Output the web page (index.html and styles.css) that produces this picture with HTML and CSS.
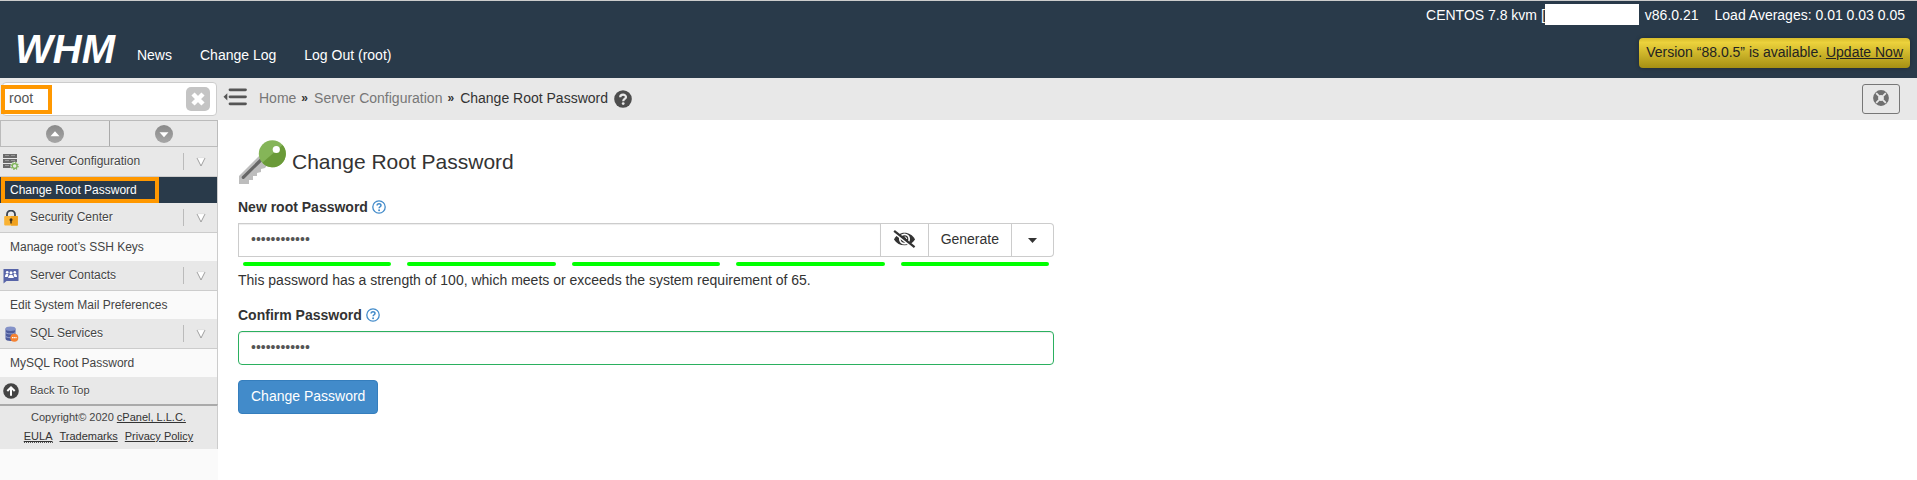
FILE: index.html
```html
<!DOCTYPE html>
<html lang="en">
<head>
<meta charset="utf-8">
<title>Change Root Password - WHM</title>
<link rel="stylesheet" href="styles.css">
</head>
<body>
<svg class="defs" aria-hidden="true">
  <defs>
    <linearGradient id="knob" x1="0" y1="0" x2="0" y2="1"><stop offset="0" stop-color="#8a8a8a"/><stop offset="1" stop-color="#a6a6a6"/></linearGradient>
    <symbol id="chevron" viewBox="0 0 10 10"><path d="M1 1h8L5 8.500z" fill="#fff"/><path d="M1 1l4 8 4-8" fill="none" stroke="#a0a0a0" stroke-width="1"/><path d="M1 .7h8" stroke="#dcdcdc" stroke-width=".6"/></symbol>
    <symbol id="question" viewBox="0 0 14 14"><circle cx="7" cy="7" r="6.200" fill="none" stroke="#428bca" stroke-width="1.300"/><path d="M5.100 5.500C5.100 3.100 9 3.200 9 5.400 9 6.700 7.100 6.800 7.100 8.300" fill="none" stroke="#428bca" stroke-width="1.500"/><circle cx="7.100" cy="10.300" r=".95" fill="#428bca"/></symbol>
  </defs>
</svg>

<header class="header">
  <a class="logo" href="#">WHM</a>
  <nav class="topnav">
    <a href="#">News</a>
    <a href="#">Change Log</a>
    <a href="#">Log Out (root)</a>
  </nav>
  <div class="status">
    <div class="server">
      <span class="host">CENTOS 7.8 kvm [<span class="redacted"></span></span>
      <span class="version">v86.0.21</span>
      <span>Load Averages: 0.01 0.03 0.05</span>
    </div>
    <div class="update">Version “88.0.5” is available. <a href="#">Update Now</a></div>
  </div>
</header>

<div class="page">
  <aside class="sidebar">
    <form class="search">
      <input class="search-input" type="text" value="root" aria-label="Search">
      <button class="clear" type="button" aria-label="Clear search">
        <svg viewBox="0 0 24 24"><path d="M7 7l10 10M17 7L7 17" stroke="#fff" stroke-width="4.500"/></svg>
      </button>
    </form>
    <div class="toggles">
      <button type="button" aria-label="Collapse all"><svg viewBox="0 0 18 18"><circle cx="9" cy="9" r="9" fill="url(#knob)"/><path d="M4.500 11.200L9 6.200l4.500 5z" fill="#fff"/></svg></button>
      <button type="button" aria-label="Expand all"><svg viewBox="0 0 18 18"><circle cx="9" cy="9" r="9" fill="url(#knob)"/><path d="M4.500 7.200h9L9 12.200z" fill="#fff"/></svg></button>
    </div>
    <nav class="menu">
      <a class="group" href="#">
        <svg class="group-icon" viewBox="0 0 16 16"><path d="M0 0h14v4H0zM0 5h14v4H0zM0 10h14v4H0z" fill="#6a6a6a"/><path d="M2 1.500h4M8 1.500h4M2 6.500h4M8 6.500h4M2 11.500h4" stroke="#999"/><circle cx="11.700" cy="12" r="4.300" fill="#e8e8e8"/><circle cx="11.700" cy="12" r="3.400" fill="none" stroke="#7cb255" stroke-width="1.200" stroke-dasharray="1.300 1.360"/><circle cx="11.700" cy="12" r="2.400" fill="#e8e8e8" stroke="#7cb255" stroke-width="1.300"/></svg>
        <span class="group-name">Server Configuration</span>
        <span class="expand"><svg><use href="#chevron"/></svg></span>
      </a>
      <a class="item selected" href="#">Change Root Password</a>
      <a class="group" href="#">
        <svg class="group-icon" viewBox="0 0 16 16"><path d="M4 8V4.500a4 4 0 0 1 8 0V8" fill="none" stroke="#3b4450" stroke-width="1.800"/><rect x="1.200" y="6" width="13.600" height="9.600" rx="1" fill="#f9b233"/><path d="M8 6h6.800v9.600H8z" fill="#f0a11e"/><circle cx="8" cy="9.700" r="1.500" fill="#3b3020"/><path d="M8 10v3.500" stroke="#3b3020" stroke-width="1.500"/></svg>
        <span class="group-name">Security Center</span>
        <span class="expand"><svg><use href="#chevron"/></svg></span>
      </a>
      <a class="item" href="#">Manage root’s SSH Keys</a>
      <a class="group" href="#">
        <svg class="group-icon" viewBox="0 0 16 16"><path d="M.5 1h15v12H3.500L.5 15.500z" fill="#5764a8"/><g fill="#fff"><circle cx="4.200" cy="4.300" r="1.300"/><circle cx="11.800" cy="4.300" r="1.300"/><path d="M2 9c0-3.800 2.500-3.800 3.400-2.500L4.600 9zM14 9c0-3.800-2.500-3.800-3.400-2.500L11.400 9z"/><circle cx="8" cy="4.700" r="1.500"/><path d="M5.200 10c0-4.500 5.600-4.500 5.600 0z"/></g></svg>
        <span class="group-name">Server Contacts</span>
        <span class="expand"><svg><use href="#chevron"/></svg></span>
      </a>
      <a class="item" href="#">Edit System Mail Preferences</a>
      <a class="group" href="#">
        <svg class="group-icon" viewBox="0 0 16 16"><path d="M2.500 2.500v10.300c0 3 10 3 10 0V2.500z" fill="#4d5b9c"/><ellipse cx="7.500" cy="2.700" rx="5" ry="2.200" fill="#8492c8"/><path d="M2.500 6c0 2.500 10 2.500 10 0M2.500 9.800c0 2.500 10 2.500 10 0" fill="none" stroke="#a5b0d8" stroke-width=".8"/><circle cx="11.300" cy="11.700" r="4" fill="#f58232"/><path d="M9 11.700h4.600" stroke="#fff" stroke-width="1.200" stroke-dasharray="1.200 .5"/></svg>
        <span class="group-name">SQL Services</span>
        <span class="expand"><svg><use href="#chevron"/></svg></span>
      </a>
      <a class="item" href="#">MySQL Root Password</a>
      <a class="group back" href="#">
        <svg class="group-icon" viewBox="0 0 16 16"><circle cx="8" cy="8" r="7.800" fill="#444"/><path d="M8 12.800V5M4.300 8L8 4.300 11.700 8" fill="none" stroke="#fff" stroke-width="2"/></svg>
        <span class="group-name">Back To Top</span>
      </a>
    </nav>
    <footer class="legal">
      <div>Copyright© 2020 <a href="#">cPanel, L.L.C.</a></div>
      <div class="legal-links"><a href="#"><abbr title="End User License Agreement">EULA</abbr></a><a href="#">Trademarks</a><a href="#">Privacy Policy</a></div>
    </footer>
  </aside>

  <main class="content">
    <div class="crumbbar">
      <button class="collapse" type="button" aria-label="Collapse menu"><svg viewBox="0 0 24 18"><path d="M7 1.800h15.500M7 8.800h15.500M7 15.800h15.500" stroke="#555" stroke-width="2.800" stroke-linecap="round"/><path d="M4.300 5.200v7.200L.5 8.800z" fill="#555"/></svg></button>
      <nav class="crumbs" aria-label="Breadcrumb">
        <a href="#">Home</a><span class="sep">»</span><a href="#">Server Configuration</a><span class="sep">»</span><span class="current">Change Root Password</span>
        <a class="help" href="#" aria-label="Help"><svg viewBox="0 0 18 18"><circle cx="9" cy="9" r="8.800" fill="#4d4d4d"/><path d="M6.200 7.300C6.200 3.800 12 4 12 7c0 2-2.800 2-2.800 4.200" fill="none" stroke="#e8e8e8" stroke-width="2.200"/><circle cx="9.200" cy="13.600" r="1.400" fill="#e8e8e8"/></svg></a>
      </nav>
      <button class="support" type="button" aria-label="Support"><svg viewBox="0 0 16 16"><circle cx="8" cy="8" r="5.400" fill="none" stroke="#707070" stroke-width="5"/><path d="M3.200 3.200l2.900 2.900M12.800 3.200L9.900 6.100M3.200 12.800l2.900-2.900M12.800 12.800L9.900 9.900" stroke="#e8e8e8" stroke-width="1.800"/></svg></button>
    </div>

    <form class="panel">
      <h1 class="title">
        <svg viewBox="0 0 50 46"><path d="M1 37L22 16l8 9-3 4-4 1v3l-4 1v3h-4v4h-4v4H1z" fill="#bdbdbd"/><path d="M5.300 38.300L24 20" stroke="#666" stroke-width="3.200" stroke-linecap="round"/><circle cx="34.300" cy="14.700" r="13.500" fill="#85b558"/><path d="M44.600 6A13.500 13.500 0 0 1 24.300 23.800z" fill="#6a9a38"/><circle cx="38.300" cy="10.500" r="3.600" fill="#fff"/></svg>
        Change Root Password
      </h1>
      <div class="label"><label for="new-pass">New root Password</label><a class="tip" href="#" aria-label="About the new password"><svg><use href="#question"/></svg></a></div>
      <div class="pass-group">
        <input class="field" id="new-pass" type="password" value="abcdefghijkl">
        <button type="button" class="addon eye" aria-label="Show password"><svg viewBox="0 0 24 20"><path d="M1 10.500C6 1.300 18 1.300 23 10.500 18 18.700 6 18.700 1 10.500z" fill="#333"/><circle cx="12" cy="10" r="5.800" fill="#fff"/><circle cx="12" cy="10" r="4" fill="#333"/><path d="M12.200 7.700a2.400 2.400 0 0 1 2.200 2.300" fill="none" stroke="#fff"/><path d="M1.500 3.700l20 16" stroke="#fff" stroke-width="2.200"/><path d="M1.200 1.500l21.300 17" stroke="#333" stroke-width="2.300"/></svg></button>
        <button type="button" class="addon">Generate</button>
        <button type="button" class="addon last" aria-label="Password options"><svg viewBox="0 0 9 5"><path d="M0 0h9L4.500 5z" fill="#333"/></svg></button>
      </div>
      <div class="meter" aria-hidden="true"><i></i><i></i><i></i><i></i><i></i></div>
      <p class="strength">This password has a strength of 100, which meets or exceeds the system requirement of 65.</p>
      <div class="label"><label for="confirm">Confirm Password</label><a class="tip" href="#" aria-label="About confirmation"><svg><use href="#question"/></svg></a></div>
      <input class="field valid" id="confirm" type="password" value="abcdefghijkl">
      <button class="submit" type="submit">Change Password</button>
    </form>
  </main>
</div>
</body>
</html>
```

FILE: styles.css
```css
*, *::before, *::after { box-sizing: border-box; }

body {
  margin: 0;
  min-height: 100vh;
  display: flex;
  flex-direction: column;
  background: #fff;
  color: #333;
  font: 14px/20px "Liberation Sans", Arial, sans-serif;
}

a { color: inherit; text-decoration: none; }
button, input { font: inherit; color: inherit; margin: 0; }
button { padding: 0; border: 0; background: none; }
svg { display: block; }
.defs { position: absolute; width: 0; height: 0; }

/* Header */
.header {
  display: flex;
  align-items: flex-end;
  min-height: 78px;
  padding: 0 7px 0 15px;
  border-top: 1px solid #ccc;
  background: #293a4a;
  color: #fff;
}
.logo {
  padding-bottom: 7px;
  font-size: 40px;
  line-height: 44px;
  font-weight: 700;
  font-style: italic;
}
.topnav { display: flex; gap: 28px; padding: 0 0 13px 22px; }
.status {
  margin-left: auto;
  align-self: flex-start;
  display: flex;
  flex-direction: column;
  align-items: flex-end;
}
.server { display: flex; align-items: center; height: 31px; padding: 0 5px 4px 0; }
.host { display: flex; align-items: center; }
.redacted { width: 94px; height: 21px; background: #fff; }
.version { margin: 0 16px 0 6px; }
.update {
  margin-top: 6px;
  padding: 4px 7px 6px;
  border-radius: 4px;
  background: linear-gradient(#d8bd2c, #ecd23c 15%, #a58f13);
  box-shadow: 0 0 4px rgba(0, 0, 0, .3);
  color: #222;
}
.update a { text-decoration: underline; }

/* Page columns */
.page { flex: 1; display: grid; grid-template-columns: 218px minmax(0, 1fr); }

/* Sidebar */
.sidebar { background: #fafafa; color: #444; font-size: 12px; }
.search {
  position: relative;
  display: flex;
  align-items: center;
  height: 42px;
  padding: 0 1px 0 2px;
  background: #e8e8e8;
}
.search-input {
  width: 100%;
  height: 34px;
  padding: 0 36px 2px 6px;
  border: 1px solid #ccc;
  border-radius: 4px;
  background: #fff;
  color: #555;
  font-size: 14px;
}
.search::after, .selected::after {
  content: "";
  position: absolute;
  left: 1px;
  border: 4px solid #ff9800;
  pointer-events: none;
}
.search::after { top: 7px; width: 51px; height: 29px; }
.clear {
  position: absolute;
  right: 8px;
  width: 24px;
  height: 24px;
  border-radius: 5px;
  background: #c4c4c4;
}
.toggles {
  display: grid;
  grid-template-columns: 1fr 1fr;
  height: 27px;
  border: 1px solid #bbb;
  background: #e8e8e8;
}
.toggles button { display: grid; place-items: center; }
.toggles button + button { border-left: 1px solid #aaa; }
.toggles svg { width: 18px; height: 18px; }
.menu { border-right: 1px solid #ccc; }
.group {
  display: flex;
  align-items: center;
  height: 30px;
  padding-left: 3px;
  border-bottom: 1px solid #ccc;
  background: #e8e8e8;
  text-shadow: 0 1px 0 #fff;
}
.group-icon { width: 16px; height: 16px; margin-right: 11px; }
.group-name { flex: 1; padding-bottom: 2px; }
.expand {
  display: grid;
  place-items: center;
  width: 34px;
  height: 17px;
  border-left: 1px solid #bbb;
}
.expand svg { width: 10px; height: 10px; }
.item { display: block; padding: 4px 10px; background: #fafafa; }
.selected {
  position: relative;
  padding: 3px 10px;
  background: #293a4a;
  color: #fff;
}
.selected::after { top: 0; width: 158px; height: 26px; }
.back { height: 27px; font-size: 11px; border: 0; }
.legal {
  padding: 2px 0 3px;
  border-top: 2px solid #aaa;
  border-right: 1px solid #ccc;
  background: #e8e8e8;
  font-size: 11px;
  line-height: 19px;
  text-align: center;
}
.legal a { color: #333; text-decoration: underline; }
.legal-links { display: flex; justify-content: center; gap: 7px; }
.legal abbr { text-decoration: none; border-bottom: 1px dotted #555; }

/* Content */
.crumbbar {
  display: flex;
  align-items: center;
  height: 42px;
  padding: 0 17px 0 5px;
  background: #e8e8e8;
}
.collapse { padding-bottom: 4px; }
.collapse svg { width: 24px; height: 18px; }
.crumbs { display: flex; align-items: center; padding: 0 0 2px 12px; color: #777; }
.sep { margin: 0 6px 0 5px; color: #333; font-size: 12px; font-weight: 700; }
.current { color: #333; }
.help svg { width: 18px; height: 18px; margin: 2px 0 0 6px; }
.support {
  display: grid;
  justify-content: center;
  padding-top: 5px;
  margin-left: auto;
  width: 38px;
  height: 30px;
  border: 1px solid #777;
  border-radius: 3px;
}
.support svg { width: 16px; height: 16px; }

.panel { max-width: 856px; padding: 19px 20px; }
.title {
  display: flex;
  align-items: center;
  gap: 4px;
  margin: 0 0 12px;
  font-size: 21px;
  font-weight: 400;
}
.title svg { width: 50px; height: 46px; }
.label { display: flex; align-items: center; gap: 4px; margin-bottom: 6px; font-weight: 700; }
.tip svg { width: 14px; height: 14px; }
.field {
  display: block;
  width: 100%;
  height: 34px;
  padding: 4px 12px 6px;
  border: 1px solid #ccc;
  background: #fff;
  box-shadow: inset 0 1px 1px rgba(0, 0, 0, .075);
  color: #555;
}
.valid { border-color: #2bb05f; border-radius: 4px; }
.pass-group { display: flex; }
.pass-group .field { flex: 1; min-width: 0; }
.addon {
  display: grid;
  place-items: center;
  height: 34px;
  padding: 0 12px 2px;
  border: 1px solid #ccc;
  border-left: 0;
  background: #fff;
}
.eye svg { width: 23px; height: 20px; }
.last { padding: 0 16px; border-radius: 0 4px 4px 0; }
.last svg { width: 9px; height: 5px; }
.meter {
  display: grid;
  grid-template-columns: repeat(5, 1fr);
  gap: 16px;
  margin: 5px 5px 4px;
}
.meter i { height: 4px; border-radius: 2px; background: #0f0; }
.strength { margin: 0 0 15px; }
.submit {
  margin-top: 15px;
  height: 34px;
  padding: 0 12px 2px;
  border: 1px solid #357ebd;
  border-radius: 4px;
  background: #428bca;
  color: #fff;
}
```
